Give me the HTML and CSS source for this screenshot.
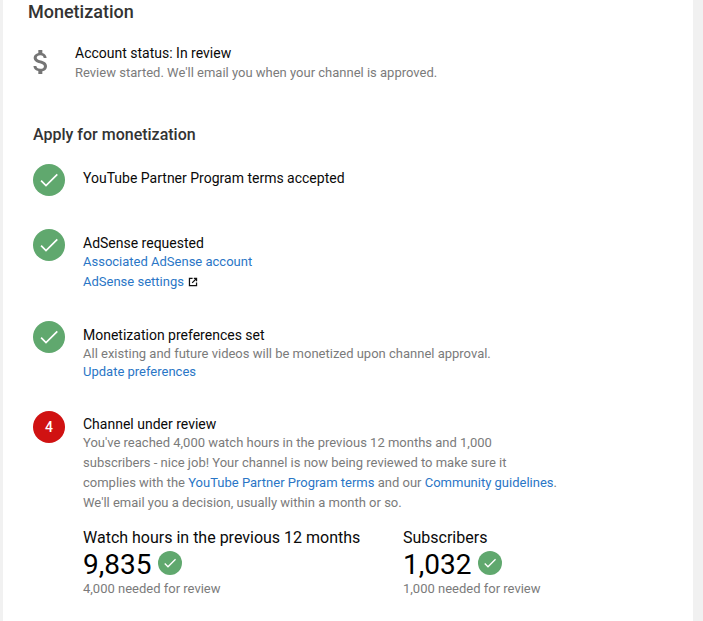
FILE: index.html
```html
<!DOCTYPE html>
<html lang="en">

<head>
    <meta charset="UTF-8">
    <title>Monetization</title>
    <link rel="stylesheet" href="styles.css">
</head>

<body>
    <div class="card">
        <h1 class="page-title">Monetization</h1>

        <div class="status">
            <svg class="status-icon" viewBox="0 0 24 24" width="32" height="32">
                <path fill="#757575" d="M11.8 10.9c-2.27-.59-3-1.2-3-2.15 0-1.09 1.01-1.85 2.7-1.85 1.78 0 2.44.85 2.5 2.1h2.21c-.07-1.72-1.12-3.3-3.21-3.81V3h-3v2.16c-1.94.42-3.5 1.68-3.5 3.61 0 2.31 1.91 3.46 4.7 4.13 2.5.6 3 1.48 3 2.41 0 .69-.49 1.79-2.7 1.79-2.06 0-2.87-.92-2.98-2.1h-2.2c.12 2.19 1.76 3.42 3.68 3.83V21h3v-2.15c1.95-.37 3.5-1.5 3.5-3.55 0-2.84-2.43-3.81-4.7-4.4z" />
            </svg>
            <div>
                <div class="status-title">Account status: In review</div>
                <div class="muted">Review started. We'll email you when your channel is approved.</div>
            </div>
        </div>

        <h2 class="section-title">Apply for monetization</h2>

        <div class="step step-terms">
            <div class="badge done">
                <svg viewBox="0 0 24 24" width="24" height="24"><path class="tick" d="M4.100 12.700L9 17.600 20.300 6.300" /></svg>
            </div>
            <div class="step-body">
                <div class="step-title">YouTube Partner Program terms accepted</div>
            </div>
        </div>

        <div class="step step-adsense">
            <div class="badge done">
                <svg viewBox="0 0 24 24" width="24" height="24"><path class="tick" d="M4.100 12.700L9 17.600 20.300 6.300" /></svg>
            </div>
            <div class="step-body">
                <div class="step-title">AdSense requested</div>
                <div class="line"><a href="#">Associated AdSense account</a></div>
                <div class="line line-tall">
                    <a href="#">AdSense settings</a><svg class="ext" viewBox="0 0 24 24" width="10" height="10">
                        <path d="M2 2h9v3H5v14h14v-6h3v9H2z" />
                        <path d="M14 2h8v8h-3V7.100l-7.900 7.900-2.100-2.100L16.900 5H14z" />
                    </svg>
                </div>
            </div>
        </div>

        <div class="step step-prefs">
            <div class="badge done">
                <svg viewBox="0 0 24 24" width="24" height="24"><path class="tick" d="M4.100 12.700L9 17.600 20.300 6.300" /></svg>
            </div>
            <div class="step-body">
                <div class="step-title">Monetization preferences set</div>
                <div class="line muted">All existing and future videos will be monetized upon channel approval.</div>
                <div class="line"><a href="#">Update preferences</a></div>
            </div>
        </div>

        <div class="step">
            <div class="badge current">4</div>
            <div class="step-body">
                <div class="step-title">Channel under review</div>
                <p class="review-text muted">You've reached 4,000 watch hours in the previous 12 months and 1,000 subscribers - nice job! Your channel is now being reviewed to make sure it complies with the <a href="#">YouTube Partner Program terms</a> and our <a href="#">Community guidelines</a>. We'll email you a decision, usually within a month or so.</p>

                <div class="stats">
                    <div class="stat stat-hours">
                        <div class="stat-label">Watch hours in the previous 12 months</div>
                        <div class="stat-value">9,835
                            <span class="badge-small"><svg viewBox="0 0 24 24" width="16" height="16"><path class="tick" d="M4.100 12.700L9 17.600 20.300 6.300" /></svg></span>
                        </div>
                        <div class="muted">4,000 needed for review</div>
                    </div>
                    <div class="stat">
                        <div class="stat-label">Subscribers</div>
                        <div class="stat-value">1,032
                            <span class="badge-small"><svg viewBox="0 0 24 24" width="16" height="16"><path class="tick" d="M4.100 12.700L9 17.600 20.300 6.300" /></svg></span>
                        </div>
                        <div class="muted">1,000 needed for review</div>
                    </div>
                </div>
            </div>
        </div>
    </div>
</body>

</html>
```

FILE: styles.css
```css
html, body {
    height: 100%;
}

body {
    margin: 0;
    padding: 0 10px 0 3px;
    background: #f1f1f1;
    font-family: Roboto, "Liberation Sans", sans-serif;
    font-size: 14px;
    color: #0a0a0a;
    overflow: hidden;
}

.card {
    background: #fff;
    min-height: 100%;
    padding: 0 25px;
    box-sizing: border-box;
}

.page-title {
    margin: 0;
    font-size: 18px;
    font-weight: 500;
    line-height: 24px;
    color: #333;
}

.status {
    display: flex;
    margin-top: 19px;
}

.status-icon {
    flex: none;
    margin: 3px 18px 0 -3px;
}

.status-title {
    line-height: 20px;
}

.muted {
    font-size: 13px;
    color: #7b7b7b;
}

.status .muted {
    line-height: 20px;
}

.section-title {
    margin: 41px 0 0 5px;
    font-size: 16px;
    font-weight: 500;
    line-height: 22px;
    color: #333;
}

.step {
    display: flex;
    margin-left: 5px;
}

.step-terms {
    margin-top: 18px;
    height: 65px;
}

.step-adsense {
    height: 92px;
}

.step-prefs {
    height: 90px;
}

.badge {
    flex: none;
    width: 32px;
    height: 32px;
    border-radius: 50%;
    display: flex;
    align-items: center;
    justify-content: center;
    color: #fff;
    font-size: 14px;
    font-weight: 500;
}

.done {
    background: #60a86e;
}

.current {
    background: #d01212;
}

.tick {
    fill: none;
    stroke: #fff;
    stroke-width: 1.7;
}

.step-body {
    margin-left: 18px;
    flex: 1;
}

.step-title {
    line-height: 20px;
    margin-top: 4px;
}

.step:last-child .step-title {
    margin-top: 3px;
}

.line {
    font-size: 13px;
    line-height: 18px;
}

.line-tall {
    margin-top: 2px;
    display: flex;
    align-items: center;
}

a {
    color: #2a76c6;
    text-decoration: none;
}

.ext {
    margin-left: 4px;
    fill: #111;
}

.review-text {
    margin: -1px 0 0;
    width: 475px;
    line-height: 20px;
}

.stats {
    display: flex;
    margin-top: 14px;
}

.stat-hours {
    width: 320px;
}

.stat-label {
    font-size: 16px;
    line-height: 22px;
}

.stat-value {
    display: flex;
    align-items: center;
    font-size: 28px;
    line-height: 32px;
    height: 32px;
    color: #000;
}

.badge-small {
    width: 24px;
    height: 24px;
    margin-left: 7px;
    margin-top: -5px;
    border-radius: 50%;
    background: #60a86e;
    display: flex;
    align-items: center;
    justify-content: center;
}

.badge-small .tick {
    stroke-width: 2;
}

.stat .muted {
    margin-top: -1px;
    line-height: 18px;
}
```
